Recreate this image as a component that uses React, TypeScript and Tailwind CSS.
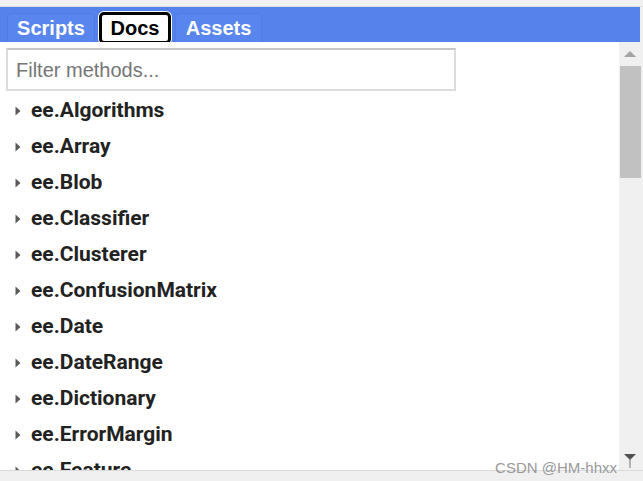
import React from "react";

const ITEMS = [
  "ee.Algorithms",
  "ee.Array",
  "ee.Blob",
  "ee.Classifier",
  "ee.Clusterer",
  "ee.ConfusionMatrix",
  "ee.Date",
  "ee.DateRange",
  "ee.Dictionary",
  "ee.ErrorMargin",
  "ee.Feature",
];

export default function App() {
  return (
    <div className="relative w-[643px] h-[481px] overflow-hidden bg-[#f0f0f0] flex flex-col font-['Liberation_Sans',Arial,sans-serif]">
      {/* top strip */}
      <div className="h-[7px] border-b border-[#e0e0e0] shrink-0" />

      <div className="flex flex-1 min-h-0 mr-[3px]">
        <div className="flex-1 flex flex-col min-w-0">
          {/* tab bar */}
          <div className="h-[35px] bg-[#5682eb] flex items-end gap-[4px] pl-[7px] shrink-0">
            <div className="h-[29px] w-[88px] rounded-t-[5px] border border-b-0 border-[#4f7be6] bg-[#5886ee] flex items-center justify-center text-white font-bold text-[20px]">
              Scripts
            </div>
            <div className="h-[32px] w-[72px] mb-[-2px] rounded-[5px] border-[3px] border-black bg-white flex items-center justify-center text-black font-bold text-[20px] shadow-[0_0_0_1px_#fff]">
              Docs
            </div>
            <div className="h-[29px] w-[87px] rounded-t-[5px] border border-b-0 border-[#4f7be6] bg-[#5886ee] flex items-center justify-center text-white font-bold text-[20px]">
              Assets
            </div>
          </div>

          <div className="flex flex-1 min-h-0">
            {/* content */}
            <div className="flex-1 bg-white overflow-hidden">
              <div className="pt-[6px] pl-[6px]">
                <div className="w-[450px] h-[43px] border-2 border-[#dcdcdc] border-t-[#c8c8c8] bg-white flex items-center pl-[8px] text-[20px] text-[#757575]">
                  Filter methods...
                </div>
              </div>
              <div className="pt-[2px]">
                {ITEMS.map((item) => (
                  <div key={item} className="h-[36px] flex items-center pl-[15px]">
                    <svg width="6" height="10" viewBox="0 0 6 10" className="mr-[10px]">
                      <path d="M0.5 0.5 L5.5 5 L0.5 9.5 Z" fill="#5a5a5a" />
                    </svg>
                    <span className="font-['Roboto',sans-serif] font-bold text-[21px] text-[#222]">{item}</span>
                  </div>
                ))}
              </div>
            </div>

            {/* scrollbar */}
            <div className="w-[21px] bg-[#f0f0f0] flex flex-col items-center">
              <div className="h-[24px] flex items-center justify-center">
                <svg width="12" height="6" viewBox="0 0 12 6">
                  <path d="M0 6 L6 0 L12 6 Z" fill="#a3a3a3" />
                </svg>
              </div>
              <div className="w-[21px] h-[112px] bg-[#c1c1c1] ml-[2px]" />
              <div className="flex-1" />
              <div className="h-[16px] flex items-start justify-center">
                <svg width="12" height="14" viewBox="0 0 12 14">
                  <path d="M0 0 L12 0 L6 6 Z" fill="#505050" />
                  <rect x="5.5" y="4" width="1" height="10" fill="#777" />
                </svg>
              </div>
            </div>
          </div>
        </div>
      </div>

      {/* bottom strip */}
      <div className="h-[11px] border-t border-[#dadada] bg-[#f0f0f0] shrink-0" />

      {/* watermark */}
      <div className="absolute right-[26px] bottom-[6px] text-[15px] leading-none text-[#999] font-['Liberation_Sans',Arial,sans-serif] whitespace-nowrap">
        CSDN @HM-hhxx
      </div>
    </div>
  );
}
